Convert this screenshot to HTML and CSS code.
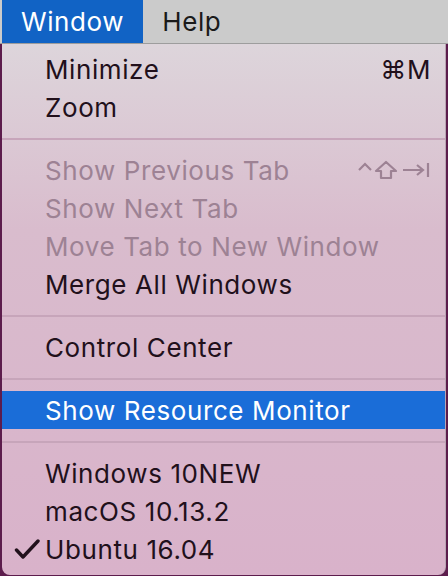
FILE: index.html
```html
<!DOCTYPE html>
<html lang="en">
  <head>
    <meta charset="UTF-8" />
    <meta name="viewport" content="width=device-width, initial-scale=1.0" />
    <title>Window Menu</title>
    <link rel="stylesheet" href="styles.css">
  </head>
  <body>
    <header class="menubar">
      <span class="menu-title active">Window</span>
      <span class="menu-title">Help</span>
    </header>

    <ul class="menu">
      <li class="item"><span class="label">Minimize</span><span class="key">⌘M</span></li>
      <li class="item"><span class="label">Zoom</span></li>
      <li class="sep"></li>
      <li class="item disabled">
        <span class="label">Show Previous Tab</span>
        <span class="key">
          <svg width="74" height="22" viewBox="0 0 74 22" fill="none" stroke="currentColor" stroke-width="2.2">
            <path d="M2 11 L8 5 L14 11" />
            <path d="M29 3 L39 12 L34 12 L34 19 L24 19 L24 12 L19 12 Z" stroke-linejoin="round" />
            <path d="M46 11 L66 11 M60 6 L66 11 L60 16" />
            <path d="M71 4 L71 18" />
          </svg>
        </span>
      </li>
      <li class="item disabled"><span class="label">Show Next Tab</span></li>
      <li class="item disabled"><span class="label">Move Tab to New Window</span></li>
      <li class="item"><span class="label">Merge All Windows</span></li>
      <li class="sep"></li>
      <li class="item"><span class="label">Control Center</span></li>
      <li class="sep"></li>
      <li class="item selected"><span class="label">Show Resource Monitor</span></li>
      <li class="sep"></li>
      <li class="item"><span class="label">Windows 10NEW</span></li>
      <li class="item"><span class="label">macOS 10.13.2</span></li>
      <li class="item">
        <svg class="check" width="26" height="20" viewBox="0 0 26 20" fill="none" stroke="currentColor" stroke-width="3.4" stroke-linecap="round" stroke-linejoin="round">
          <path d="M2.5 11 L9 18 L24 2" />
        </svg>
        <span class="label">Ubuntu 16.04</span>
      </li>
    </ul>
  </body>
</html>
```

FILE: styles.css
```css
body {
  margin: 0;
  padding: 0;
  background: #5c1c4c;
  font-family: "Inter", "Liberation Sans", sans-serif;
  font-size: 26px;
  letter-spacing: 0.6px;
  color: #21101b;
}

.menubar {
  display: flex;
  height: 43px;
  background-color: #cbcbcb;
  border-bottom: 1px solid #9d9d9d;
  padding-left: 2px;
}

.menu-title {
  display: flex;
  align-items: center;
  padding: 0 19px;
  color: #1a1a1a;
}

.menu-title.active {
  background-color: #1163c5;
  color: #ffffff;
}

.menu {
  list-style: none;
  margin: 0 2px;
  padding: 6px 0 7px;
  background: linear-gradient(to bottom, #ddd5db 0%, #d9bccd 35%, #d9b2ca 100%);
  border-radius: 0 0 8px 8px;
  border-right: 1px solid #b9a5b3;
}

.item {
  position: relative;
  display: flex;
  align-items: center;
  justify-content: space-between;
  height: 38px;
  padding: 0 14px 0 43px;
}

.item.disabled {
  color: #9d8294;
}

.item.selected {
  background-color: #1a6dd8;
  color: #ffffff;
}

.key {
  display: flex;
  align-items: center;
}

.check {
  position: absolute;
  left: 12px;
  top: 9px;
}

.sep {
  height: 2px;
  margin: 12px 0 11px;
  background-color: #c7a5ba;
}
```
